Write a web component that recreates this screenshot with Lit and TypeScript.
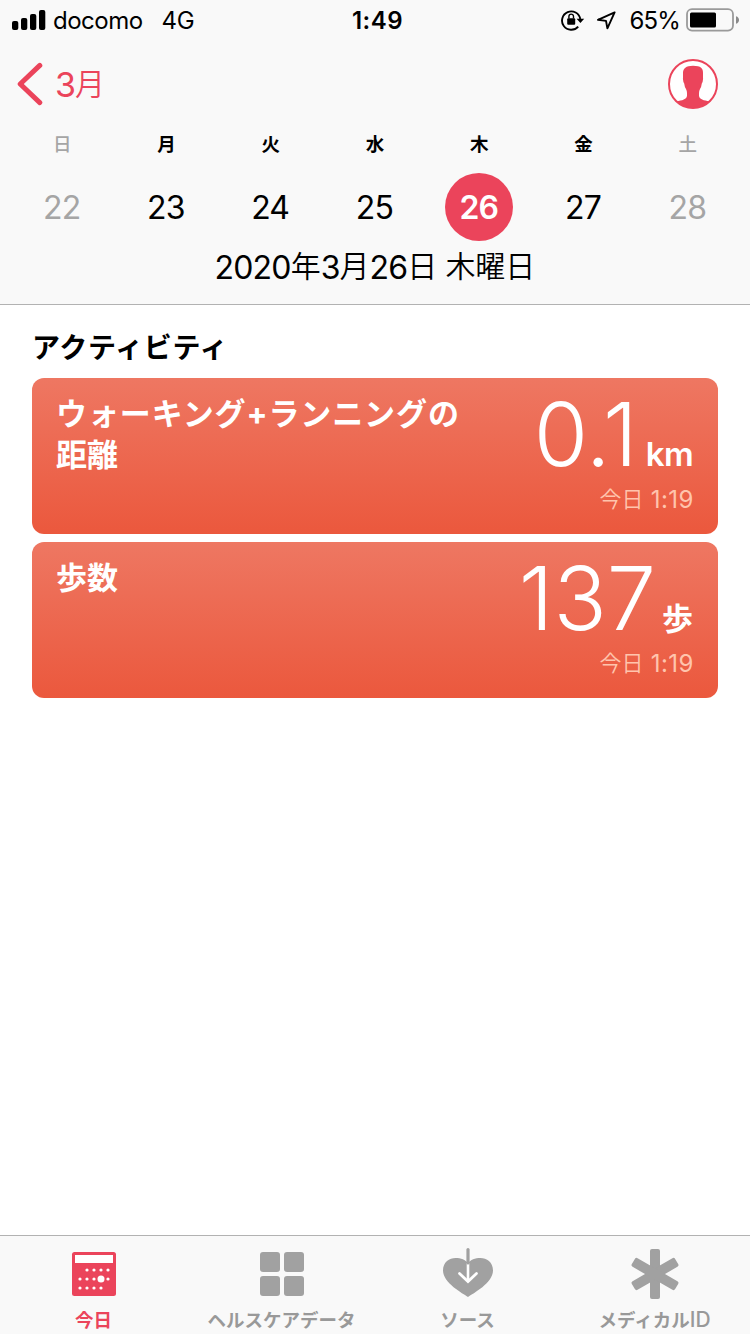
import { LitElement, html, css, svg, nothing } from "lit";
import { customElement, property } from "lit/decorators.js";
import { classMap } from "lit/directives/class-map.js";

interface Day {
  name: string;
  date: number;
  weekend?: boolean;
  selected?: boolean;
}

const WEEK: Day[] = [
  { name: "日", date: 22, weekend: true },
  { name: "月", date: 23 },
  { name: "火", date: 24 },
  { name: "水", date: 25 },
  { name: "木", date: 26, selected: true },
  { name: "金", date: 27 },
  { name: "土", date: 28, weekend: true },
];

@customElement("status-bar")
export class StatusBar extends LitElement {
  static styles = css`
    :host {
      display: flex;
      justify-content: space-between;
      height: 40px;
      line-height: 40px;
      font-size: 24px;
      color: #000;
    }
    .side {
      flex: 1;
      display: flex;
      align-items: center;
    }
    .left {
      padding-left: 12px;
    }
    .right {
      justify-content: flex-end;
      padding-right: 11px;
    }
    .side span {
      padding-top: 2px;
    }
    .carrier {
      margin-left: 7px;
      letter-spacing: -0.5px;
    }
    .network {
      margin-left: 19px;
      letter-spacing: -0.4px;
    }
    .time {
      font-weight: 600;
      letter-spacing: 0.5px;
      padding-left: 4px;
      line-height: 42px;
    }
    .percent {
      margin: 0 6px 0 13px;
      letter-spacing: -0.8px;
    }
    .location {
      margin-left: 12px;
    }
    svg {
      display: block;
    }
  `;

  render() {
    return html`
      <div class="side left">
        <svg width="34" height="20" viewBox="0 0 34 20">
          <rect x="0" y="11" width="6.3" height="9" rx="2" />
          <rect x="9" y="8" width="6.3" height="12" rx="2" />
          <rect x="18" y="4" width="6.3" height="16" rx="2" />
          <rect x="27" y="0" width="6.3" height="20" rx="2" />
        </svg>
        <span class="carrier">docomo</span>
        <span class="network">4G</span>
      </div>
      <div class="time">1:49</div>
      <div class="side right">
        <svg width="24" height="22" viewBox="0 0 24 22">
          <path d="M17.2 17.6A9.2 9.2 0 1 1 19.3 10" fill="none" stroke="#000" stroke-width="1.9" />
          <path d="M15.6 9.8H23.2L19.4 14Z" />
          <rect x="6.2" y="9.3" width="8" height="6.4" rx="1" />
          <path d="M7.9 9.6V7.4a2.3 2.3 0 0 1 4.6 0V9.6" fill="none" stroke="#000" stroke-width="1.4" />
        </svg>
        <svg class="location" width="19" height="20" viewBox="0 0 19 20">
          <path d="M17.6 2.4L1 9.8L9 10.9L10.4 18.4Z" fill="none" stroke="#000" stroke-width="1.9" stroke-linejoin="round" />
        </svg>
        <span class="percent">65%</span>
        <svg width="53" height="24" viewBox="0 0 53 24">
          <rect x="1" y="1.2" width="46" height="21.4" rx="5" fill="none" stroke="#9a9a9a" stroke-width="1.8" />
          <rect x="4" y="4.5" width="26" height="15" rx="1.5" />
          <path d="M50 8.2q3 1 3 3.8t-3 3.8z" fill="#8a8a8a" />
        </svg>
      </div>
    `;
  }
}

@customElement("week-header")
export class WeekHeader extends LitElement {
  static styles = css`
    :host {
      display: block;
      box-sizing: border-box;
      height: 305px;
      background: #f9f9f9;
      border-bottom: 1px solid #b2b2b2;
    }
    .nav {
      display: flex;
      align-items: center;
      justify-content: space-between;
      height: 88px;
      padding: 0 32px 0 17px;
      color: #eb445b;
    }
    .back {
      display: flex;
      align-items: center;
      gap: 12px;
      font-size: 34px;
      line-height: 40px;
      letter-spacing: -1px;
    }
    .back span {
      padding-top: 1px;
    }
    .kanji {
      font-size: 30px;
      line-height: 0;
      font-weight: 350;
      letter-spacing: 0;
      vertical-align: 2px;
    }
    svg {
      display: block;
    }
    .week {
      display: grid;
      grid-template-columns: repeat(7, 1fr);
      padding: 0 10px;
      justify-items: center;
    }
    .day {
      display: grid;
      grid-template-rows: 33px 68px;
      row-gap: 12px;
      justify-items: center;
      color: #000;
    }
    .name {
      font-size: 18.5px;
      font-weight: 700;
      line-height: 33px;
    }
    .date {
      width: 68px;
      height: 68px;
      border-radius: 50%;
      text-align: center;
      text-indent: -1px;
      font-size: 32px;
      line-height: 70px;
      letter-spacing: -0.8px;
    }
    .weekend {
      color: #a5a5a5;
    }
    .weekend .name {
      font-weight: 500;
    }
    .selected .date {
      background: #eb445b;
      color: #fff;
      font-weight: 600;
    }
    .full {
      text-align: center;
      font-size: 32px;
      line-height: 53px;
      letter-spacing: -0.85px;
      color: #000;
    }
  `;

  render() {
    return html`
      <status-bar></status-bar>
      <div class="nav">
        <div class="back">
          <svg width="26" height="44" viewBox="0 0 26 44">
            <path d="M22.8 3.4L3.2 22L22.8 40.6" fill="none" stroke="#eb445b" stroke-width="5" stroke-linecap="round" stroke-linejoin="round" />
          </svg>
          <span>3<span class="kanji">月</span></span>
        </div>
        <svg width="50" height="50" viewBox="0 0 50 50">
          <circle cx="25" cy="25" r="24" fill="#fff" />
          <path
            d="M25 6.7C18 6.7 15 9.5 15 14V18.5Q14.8 19 15.1 21Q15.3 24 16.2 24.5Q16.6 28 18 30Q19 32 19 34V36.5C19 40.5 14 41.3 8.5 42.5Q15.500 49 25 49T41.500 42.500C36 41.300 31 40.500 31 36.500V34Q31 32 32 30Q33.400 28 33.800 24.500Q34.700 24 34.900 21Q35.200 19 35 18.500V14C35.200 9.500 33 6.700 25 6.700Z"
            fill="#eb445b"
          />
          <circle cx="25" cy="25" r="24" fill="none" stroke="#eb445b" stroke-width="2" />
        </svg>
      </div>
      <div class="week">
        ${WEEK.map(
          (d) => html`
            <div class=${classMap({ day: true, weekend: !!d.weekend, selected: !!d.selected })}>
              <span class="name">${d.name}</span>
              <span class="date">${d.date}</span>
            </div>
          `,
        )}
      </div>
      <div class="full">2020<span class="kanji">年</span>3<span class="kanji">月</span>26<span class="kanji">日</span> <span class="kanji">木曜日</span></div>
    `;
  }
}

@customElement("health-card")
export class HealthCard extends LitElement {
  static styles = css`
    :host {
      display: flex;
      justify-content: space-between;
      box-sizing: border-box;
      height: 156px;
      padding: 16px 25px 0 24px;
      border-radius: 12px;
      background: linear-gradient(#ee7762, #eb583d);
      color: #fff;
    }
    .title {
      width: 420px;
      margin-top: -1px;
      font-size: 31px;
      font-weight: 700;
      line-height: 41px;
    }
    .kana {
      letter-spacing: 0.9px;
    }
    .reading {
      text-align: right;
    }
    .value {
      display: flex;
      align-items: baseline;
      justify-content: flex-end;
      height: 80px;
    }
    .number {
      font-size: 88px;
      font-weight: 300;
      line-height: 80px;
      letter-spacing: 0;
    }
    .unit {
      margin-left: 8px;
      font-size: 33px;
      font-weight: 600;
      line-height: 40px;
      letter-spacing: -0.6px;
    }
    .unit.cjk {
      margin-left: 6px;
      font-size: 31px;
      font-weight: 700;
      letter-spacing: 0;
    }
    .time {
      margin-top: 10px;
      margin-right: -1px;
      font-size: 24px;
      line-height: 32px;
      font-weight: 400;
      letter-spacing: 0.5px;
      color: #ffc4ad;
    }
    .kanji {
      font-size: 22px;
      line-height: 0;
      font-weight: 350;
      letter-spacing: 0;
      vertical-align: 1px;
    }
  `;

  @property() heading = "";
  @property() value = "";
  @property() unit = "";

  render() {
    const runs = this.heading.split(/([\u3040-\u30ff+]+)/).filter(Boolean);
    return html`
      <div class="title">
        ${runs.map((run) => (/[\u3040-\u30ff]/.test(run) ? html`<span class="kana">${run}</span>` : run))}
      </div>
      <div class="reading">
        <div class="value">
          <span class="number">${this.value}</span>
          <span class=${classMap({ unit: true, cjk: this.unit === "歩" })}>${this.unit}</span>
        </div>
        <div class="time"><span class="kanji">今日</span> 1:19</div>
      </div>
    `;
  }
}

const CALENDAR_DOTS: [number, number][] = [
  [15, 18], [22, 18], [29, 18], [36, 18],
  [8, 27], [15, 27], [22, 27], [36, 27],
  [8, 36], [15, 36], [22, 36], [29, 36],
];

const ICONS = {
  today: svg`
    <rect x="3" y="4" width="44" height="44" rx="2.5" fill="#eb445b" />
    <rect x="6" y="7" width="38" height="8" fill="#fff" />
    ${CALENDAR_DOTS.map(([x, y]) => svg`<circle cx=${x + 3} cy=${y + 4} r="1.6" fill="#fff" />`)}
    <circle cx="32" cy="31" r="3.5" fill="#fff" />`,
  data: svg`
    <g fill="#a1a1a1">
      <rect x="3" y="4" width="20" height="20" rx="3" />
      <rect x="27" y="4" width="20" height="20" rx="3" />
      <rect x="3" y="28" width="20" height="20" rx="3" />
      <rect x="27" y="28" width="20" height="20" rx="3" />
    </g>`,
  sources: svg`
    <path d="M25 49C20 45.5 0 35 0 22.5C0 14 6.5 10 12.5 10C18 10 22.5 11.5 25 15.5C27.5 11.5 32 10 37.5 10C43.5 10 50 14 50 22.5C50 35 30 45.5 25 49Z" fill="#a1a1a1" />
    <path d="M25 15V33" stroke="#fff" stroke-width="2.6" />
    <path d="M16.5 25.5L25 33.5L33.5 25.5" fill="none" stroke="#fff" stroke-width="2.8" stroke-linecap="round" />
    <path d="M25 1.500V15" stroke="#a1a1a1" stroke-width="3.2" stroke-linecap="round" />`,
  medical: svg`
    <g fill="#a1a1a1">
      <rect x="20" y="1" width="10" height="50" rx="2" />
      <rect x="20" y="1" width="10" height="50" rx="2" transform="rotate(60 25 26)" />
      <rect x="20" y="1" width="10" height="50" rx="2" transform="rotate(-60 25 26)" />
    </g>`,
};

@customElement("tab-bar")
export class TabBar extends LitElement {
  static styles = css`
    :host {
      display: grid;
      grid-template-columns: 188px 188px 184px 190px;
      box-sizing: border-box;
      height: 99px;
      background: #f9f9f9;
      border-top: 1px solid #b2b2b2;
    }
    .tab {
      display: flex;
      flex-direction: column;
      align-items: center;
      padding-top: 12px;
      color: #999;
      font-size: 18.5px;
      font-weight: 700;
    }
    .active {
      color: #eb445b;
    }
    .icon {
      display: block;
      overflow: visible;
    }
    .label {
      margin-top: 7px;
      margin-right: 1px;
      line-height: 26px;
      white-space: nowrap;
    }
    .latin {
      font-size: 21px;
      font-weight: 500;
      line-height: 0;
    }
  `;

  private tab(icon: unknown, label: string, latin = "", active = false) {
    return html`
      <div class=${classMap({ tab: true, active })}>
        <svg class="icon" width="50" height="52" viewBox="0 0 50 52">${icon}</svg>
        <span class="label">${label}${latin ? html`<span class="latin">${latin}</span>` : nothing}</span>
      </div>
    `;
  }

  render() {
    return html`
      ${this.tab(ICONS.today, "今日", "", true)}
      ${this.tab(ICONS.data, "ヘルスケアデータ")}
      ${this.tab(ICONS.sources, "ソース")}
      ${this.tab(ICONS.medical, "メディカル", "ID")}
    `;
  }
}

@customElement("app-root")
export class AppRoot extends LitElement {
  static styles = css`
    :host {
      display: flex;
      flex-direction: column;
      width: 750px;
      height: 1334px;
      overflow: hidden;
      background: #fff;
      font-family: Inter, "Noto Sans CJK JP", sans-serif;
    }
    .content {
      flex: 1;
      padding: 14px 32px 0;
    }
    .section {
      margin: 0;
      font-size: 28px;
      font-weight: 700;
      line-height: 59px;
      letter-spacing: 0.7px;
      color: #000;
    }
    .cards {
      display: grid;
      gap: 8px;
    }
  `;

  render() {
    return html`
      <week-header></week-header>
      <div class="content">
        <h2 class="section">アクティビティ</h2>
        <div class="cards">
          <health-card heading="ウォーキング+ランニングの距離" value="0.1" unit="km"></health-card>
          <health-card heading="歩数" value="137" unit="歩"></health-card>
        </div>
      </div>
      <tab-bar></tab-bar>
    `;
  }
}
